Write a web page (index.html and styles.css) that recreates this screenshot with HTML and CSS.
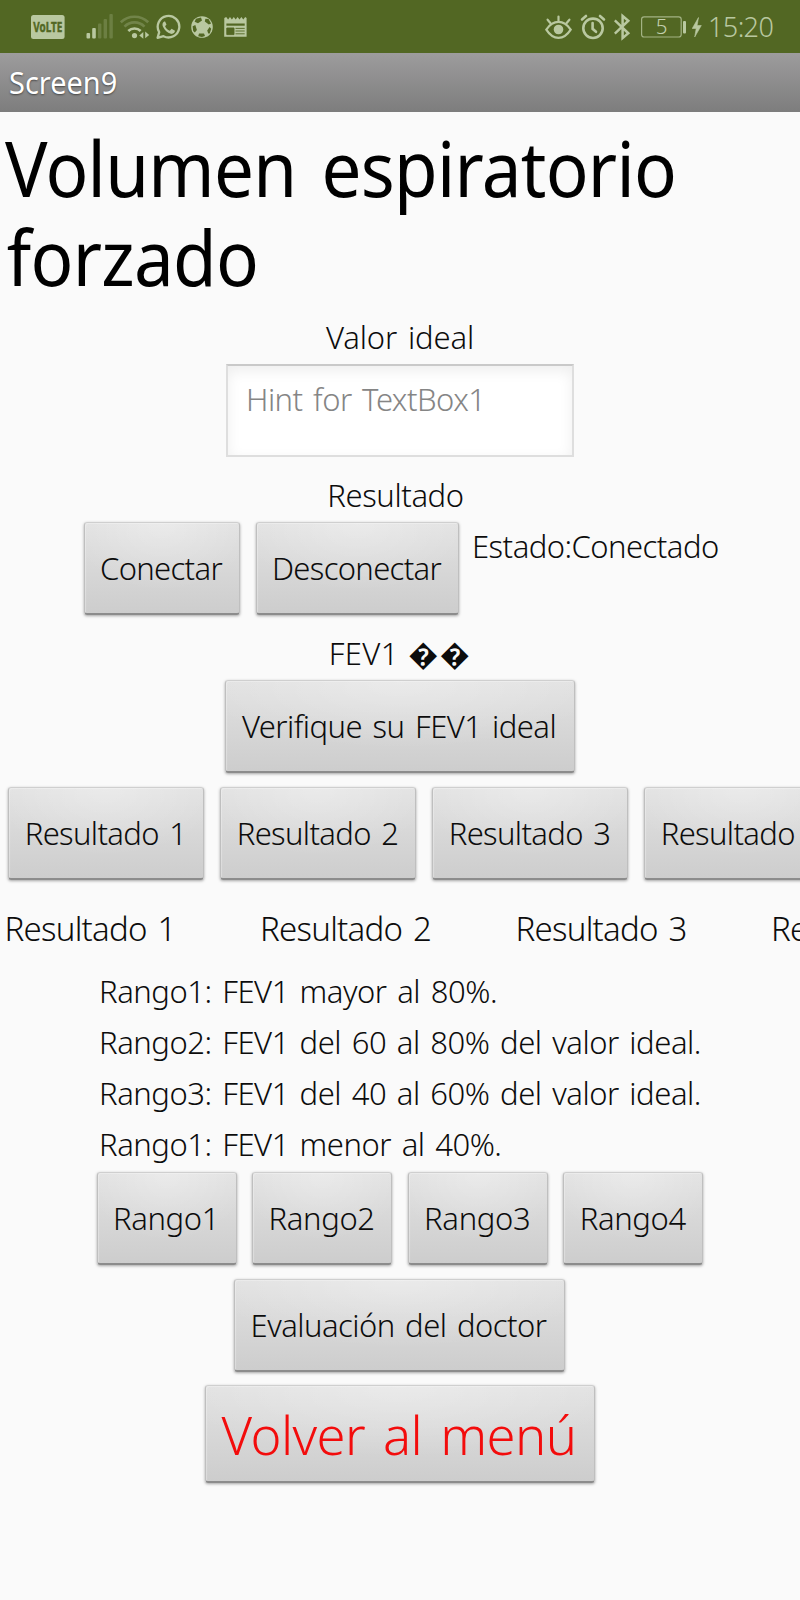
FILE: index.html
```html
<!DOCTYPE html>
<html lang="es">
<head>
<meta charset="utf-8">
<title>Screen9</title>
<link rel="stylesheet" href="styles.css">
</head>
<body>
<div class="screen">
  <div class="status">
    <div class="status-left">
      <svg class="icon volte" width="34" height="53" viewBox="31 0 34 53"><rect x="31" y="15" width="33.6" height="24" rx="2.5" fill="#b9c8a0"/><text x="33.3" y="32" font-size="13.5" font-weight="700" textLength="29" lengthAdjust="spacingAndGlyphs" fill="#526723" stroke="#526723" stroke-width=".5">VoLTE</text></svg>
      <svg class="icon signal" width="28" height="53" viewBox="86 0 28 53" fill="#b9c8a0"><rect x="86.5" y="33" width="3.6" height="5.5" rx="1"/><rect x="92.2" y="28" width="3.6" height="10.5" rx="1"/><g opacity=".25"><rect x="98" y="23.5" width="3.4" height="15" rx="1"/><rect x="103.6" y="19" width="3.4" height="19.5" rx="1"/><rect x="109.4" y="14" width="3.4" height="24.5" rx="1"/></g></svg>
      <svg class="icon wifi" width="30" height="53" viewBox="120 0 30 53" fill="none" stroke="#b9c8a0" stroke-width="2.6"><g opacity=".3"><path d="M120.8 22.3a19.5 19.5 0 0 1 27.4 0"/><path d="M124.5 26.6a14 14 0 0 1 20 0"/></g><path d="M128.3 31a8.8 8.8 0 0 1 12.4 0"/><circle cx="134.5" cy="35.6" r="2.6" fill="#b9c8a0" stroke="none"/><path d="M143.3 32v6.8l-4-3.4zM145.2 31.5v6.8l4-3.4z" fill="#b9c8a0" stroke="none"/></svg>
      <svg class="icon whatsapp" width="26" height="53" viewBox="156 0 26 53" fill="none" stroke="#b9c8a0"><path d="M157.6 37.8l1.6-5.7a10.8 10.8 0 1 1 4.3 4.1z" stroke-width="2.3" stroke-linejoin="round"/><path d="M164.2 21.5c-1.8 1-2.2 3-1.2 5.3 1.7 3.7 4.3 6 7.8 7 2.2.4 4-.8 4.2-3l-3.4-2-1.8 1.9c-2.3-1-3.8-2.5-4.7-4.5l1.4-1.6-1.4-3.1z" fill="#b9c8a0" stroke="none"/></svg>
      <svg class="icon ball" width="24" height="53" viewBox="190 0 24 53"><circle cx="202" cy="27" r="10.8" fill="#b9c8a0"/><g fill="#526723"><path d="M196 18.7l5-1.2 1 2.9-4 2.9-3.4-1.6zM208.5 19l2.6 4.4-2.3 1-4-2.9.6-2.8zM192.6 26.3l2.7-1.4 1.6 5-2.1 2.7-1.6-1.5zM211.2 28.8l-1.6-1.9-2.4 3.7 1 3 1.5-.2zM199 33.4h5l1 2.6-3 1.1-3.8-.8z"/></g></svg>
      <svg class="icon news" width="24" height="53" viewBox="224 0 24 53"><path d="M224.3 18l1.9-1 1.9 2.6 1.9-2.6 1.9 2.6 1.9-2.6 1.9 2.6 1.9-2.6 1.9 2.6 1.9-2.6 1.9 2.6 1.9-2.6 1.4 1v18.7h-22.4z" fill="#b9c8a0"/><path d="M226.4 23.5h18.3v2.2h-18.3z" fill="#526723"/><path d="M226.8 28h7.2v6.6h-7.2zM235.5 28.4h9.2M235.5 31h9.2M235.5 33.8h9.2" fill="#526723" stroke="#526723" stroke-width=".9"/></svg>
    </div>
    <div class="status-right">
      <svg class="icon eye" width="28" height="53" viewBox="545 0 28 53" fill="none" stroke="#b9c8a0" stroke-width="2.2" stroke-linecap="round"><path d="M546.3 29.6c7-10.2 17.4-10.2 24.4 0c-7 11-17.4 11-24.4 0z"/><circle cx="558.5" cy="29.5" r="4.8" fill="#b9c8a0" stroke="none"/><path d="M558.5 20.5v-4M550.3 23l-2.7-3.3M566.7 23l2.7-3.3"/></svg>
      <svg class="icon alarm" width="26" height="53" viewBox="580 0 26 53" fill="none" stroke="#b9c8a0" stroke-width="2.6" stroke-linecap="round"><circle cx="593" cy="28.3" r="9.7"/><path d="M592.6 23v5.800l3.400 3"/><path d="M582 19.500l4-3.500M604 19.500l-4-3.500"/></svg>
      <svg class="icon bluetooth" width="17" height="53" viewBox="614 0 17 53" fill="none" stroke="#b9c8a0" stroke-width="2.5"><path d="M614.8 20.3l13.500 13-5.700 4.800V16l5.700 4.700-13.500 13"/></svg>
      <svg class="icon battery" width="46" height="53" viewBox="641 0 46 53"><rect x="641.6" y="16.8" width="39.6" height="20.2" rx="2.5" fill="none" stroke="#a3b384" stroke-width="1.2"/><rect x="683" y="21" width="3" height="12.5" rx="1" fill="#b9c8a0"/><text x="661.5" y="33.7" font-size="20.5" font-weight="300" text-anchor="middle" fill="#c3d0ae">5</text></svg>
      <svg class="icon bolt" width="10" height="53" viewBox="692 0 10 53"><path d="M698.5 17.5l-6.300 11h4l-1.500 8.500 6.600-11.500h-4.200z" fill="#b9c8a0" stroke="#b9c8a0" stroke-width=".6"/></svg>
      <span class="clock">15:20</span>
    </div>
  </div>
  <div class="titlebar"><span>Screen9</span></div>

  <h1 class="heading"><span>Volumen espiratorio</span><span>forzado</span></h1>
  <div class="label ideal">Valor ideal</div>
  <div class="textbox">Hint for TextBox1</div>
  <div class="label result">Resultado</div>
  <div class="row connect">
    <div class="btn tight" style="width:156px">Conectar</div>
    <div class="btn tight" style="width:203px">Desconectar</div>
    <div class="state">Estado:Conectado</div>
  </div>
  <div class="label fev"><span>FEV1</span> <span class="unknown">��</span></div>
  <div class="row verify"><div class="btn" style="width:350px">Verifique su FEV1 ideal</div></div>
  <div class="row results">
    <div class="btn">Resultado 1</div>
    <div class="btn">Resultado 2</div>
    <div class="btn">Resultado 3</div>
    <div class="btn">Resultado 4</div>
  </div>
  <div class="row result-labels">
    <span>Resultado 1</span><span>Resultado 2</span><span>Resultado 3</span><span>Resultado 4</span>
  </div>
  <div class="ranges">
    <div>Rango1: FEV1 mayor al 80%.</div>
    <div>Rango2: FEV1 del 60 al 80% del valor ideal.</div>
    <div>Rango3: FEV1 del 40 al 60% del valor ideal.</div>
    <div>Rango1: FEV1 menor al 40%.</div>
  </div>
  <div class="row range-buttons">
    <div class="btn">Rango1</div>
    <div class="btn">Rango2</div>
    <div class="btn">Rango3</div>
    <div class="btn">Rango4</div>
  </div>
  <div class="row doctor"><div class="btn" style="width:331px">Evaluación del doctor</div></div>
  <div class="row menu"><div class="btn back">Volver al menú</div></div>
</div>
</body>
</html>
```
FILE: styles.css
```css
* { box-sizing: border-box; }
body { margin: 0; background: #fafafa; }
.screen {
  width: 800px;
  height: 1600px;
  overflow: hidden;
  display: flex;
  flex-direction: column;
  background: #fafafa;
  color: #0c0c0c;
  font-family: "Noto Sans", "Open Sans", sans-serif;
  font-weight: 300;
  font-size: 31px;
  letter-spacing: -0.53px;
  word-spacing: 3px;
  white-space: nowrap;
}
.screen > * { flex: none; }

.status {
  height: 53px;
  background: #526723;
  display: flex;
  justify-content: space-between;
  padding: 0 26px 0 31px;
  letter-spacing: 0;
}
.status-left, .status-right { display: flex; }
.icon { display: block; flex: none; }
.signal { margin-left: 21px; }
.wifi { margin-left: 6px; }
.whatsapp { margin-left: 6px; }
.ball { margin-left: 8px; }
.news { margin-left: 10px; }
.alarm { margin-left: 7px; }
.bluetooth { margin-left: 8px; }
.battery { margin-left: 10px; }
.bolt { margin-left: 5px; }
.clock {
  width: 66px;
  margin-left: 6px;
  font-size: 27px;
  line-height: 54px;
  letter-spacing: -0.6px;
  color: #b9c8a0;
}

.titlebar {
  height: 59px;
  padding-left: 9px;
  background: linear-gradient(#9d9c9d, #7d7d7d);
  color: #fff;
  font-weight: 400;
  line-height: 59px;
  letter-spacing: 0;
  text-shadow: 0 1px 2px rgba(0, 0, 0, .5);
}
.titlebar span { display: inline-block; transform: scaleX(.933); transform-origin: left; }

.heading {
  height: 178px;
  margin: 11px 0 0;
  padding-left: 5px;
  color: #000;
  font-size: 76px;
  font-weight: 400;
  line-height: 89px;
  letter-spacing: -0.8px;
  word-spacing: 8px;
}
.heading span { display: block; transform: scaleX(.934); transform-origin: left; }
.heading span + span { padding-left: 2px; }

.label { height: 40px; line-height: 40px; text-align: center; }
.ideal { margin-top: 16px; letter-spacing: -0.13px; }
.textbox {
  width: 348px;
  height: 93px;
  margin: 7px 0 0 226px;
  padding: 0 18px;
  border: 2px solid #dedede;
  border-top-color: #c9c9c9;
  background: #fff;
  box-shadow: inset 0 5px 14px rgba(0, 0, 0, .07);
  color: #858585;
  line-height: 66px;
}
.result { margin-top: 18px; padding-right: 9px; letter-spacing: -0.4px; }

.row { display: flex; }
.btn {
  height: 93px;
  flex: none;
  padding-right: 2px;
  border: 1px solid #bfbfbf;
  border-top-color: #cfcfcf;
  border-bottom: 2px solid #8c8c8c;
  border-radius: 3px;
  background: radial-gradient(ellipse 60% 75% at 50% 0, rgba(255, 255, 255, .3), rgba(255, 255, 255, 0)), linear-gradient(#e2e2e2, #cdcdcd);
  box-shadow: 0 1px 3px rgba(0, 0, 0, .35), inset 1px 1px 1px rgba(255, 255, 255, .3);
  line-height: 90px;
  text-align: center;
}
.connect { margin-top: 7px; padding-left: 84px; }
.connect .btn + .btn { margin-left: 16px; }
.tight { letter-spacing: -0.67px; }
.state { margin: 4px 0 0 13px; line-height: 40px; letter-spacing: -0.53px; }
.fev { margin-top: 18px; letter-spacing: .4px; word-spacing: 1px; }
.unknown { font-size: 30px; letter-spacing: 1.5px; }
.verify { margin-top: 7px; padding-left: 225px; }
.results { margin-top: 14px; padding-left: 8px; gap: 16px; }
.results .btn { width: 196px; padding-right: 1px; letter-spacing: -0.65px; }
.result-labels { margin-top: 27px; padding-left: 4.5px; font-size: 33px; line-height: 44px; letter-spacing: -0.75px; }
.result-labels span { flex: none; width: 255.5px; }
.ranges { margin-top: 15px; padding-left: 99px; line-height: 51px; letter-spacing: -0.46px; }
.range-buttons { margin-top: 2px; padding-left: 96.5px; gap: 15.6px; letter-spacing: -0.35px; }
.range-buttons .btn { width: 140px; padding-right: 1px; }
.doctor { margin-top: 14px; padding-left: 234px; }
.menu { margin-top: 13px; padding-left: 205px; }
.back { width: 390px; height: 98px; padding-right: 2px; color: #f30c0c; font-size: 52.5px; line-height: 98px; letter-spacing: -0.6px; word-spacing: 5px; }
```
